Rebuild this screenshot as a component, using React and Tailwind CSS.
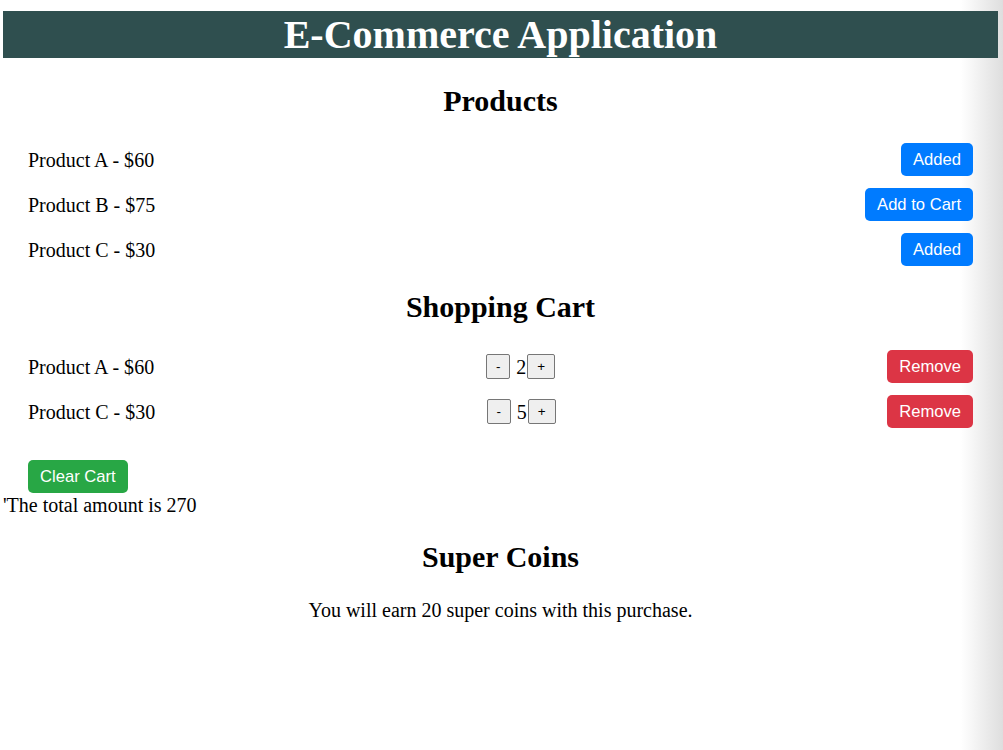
import React from "react";

const serif = { fontFamily: '"Liberation Serif", "Times New Roman", serif' };
const sans = { fontFamily: '"Liberation Sans", Arial, sans-serif' };

function Btn({ children, color, className = "" }) {
  return (
    <button
      className={`text-white rounded-[5px] px-[12px] pt-[1px] h-[33px] text-[16.6px] leading-none ${color} ${className}`}
      style={sans}
    >
      {children}
    </button>
  );
}

function Qty({ n }) {
  return (
    <div className="flex items-center">
      <button
        className="w-[24px] h-[25px] border border-[#767676] bg-[#efefef] rounded-[2px] text-[13.5px] leading-none"
        style={sans}
      >
        -
      </button>
      <span className="text-[20px] ml-[6px] mr-[1px] leading-none">{n}</span>
      <button
        className="w-[28px] h-[25px] border border-[#767676] bg-[#efefef] rounded-[2px] text-[13.5px] leading-none"
        style={sans}
      >
        +
      </button>
    </div>
  );
}

export default function App() {
  const products = [
    { name: "Product A", price: 60, added: true },
    { name: "Product B", price: 75, added: false },
    { name: "Product C", price: 30, added: true },
  ];
  const cart = [
    { name: "Product A", price: 60, qty: 2 },
    { name: "Product C", price: 30, qty: 5 },
  ];
  return (
    <div className="relative w-[1003px] h-[750px] bg-white overflow-hidden text-black" style={serif}>
      <div className="absolute top-0 right-0 w-[42px] h-full bg-gradient-to-r from-transparent to-[#dedede] pointer-events-none" />
      <div className="relative w-[995px] ml-[3px] pt-[11px]">
        <div className="bg-[#2f4f4f] h-[47px] flex items-center justify-center">
          <h1 className="text-white font-bold text-[40px] leading-none">E-Commerce Application</h1>
        </div>
        <h2 className="text-center font-bold text-[30px] leading-none mt-[28px]">Products</h2>
        <div className="mt-[27px] px-[25px] flex flex-col gap-[12px]">
          {products.map((p) => (
            <div key={p.name} className="flex items-center justify-between h-[33px]">
              <span className="text-[20px]">
                {p.name} - ${p.price}
              </span>
              <Btn color="bg-[#007bff]">{p.added ? "Added" : "Add to Cart"}</Btn>
            </div>
          ))}
        </div>
        <h2 className="text-center font-bold text-[30px] leading-none mt-[26px]">Shopping Cart</h2>
        <div className="mt-[28px] px-[25px] flex flex-col gap-[12px]">
          {cart.map((p) => (
            <div key={p.name} className="flex items-center justify-between h-[33px]">
              <span className="text-[20px]">
                {p.name} - ${p.price}
              </span>
              <Qty n={p.qty} />
              <Btn color="bg-[#dc3545]" className="h-[32px]">Remove</Btn>
            </div>
          ))}
        </div>
        <div className="px-[25px] mt-[32px] flex">
          <Btn color="bg-[#28a745]" className="h-[31px]">Clear Cart</Btn>
        </div>
        <div className="text-[20px] leading-[24px]">'The total amount is 270</div>
        <h2 className="text-center font-bold text-[30px] leading-none mt-[25px]">Super Coins</h2>
        <p className="text-center text-[20px] leading-[24px] mt-[26px]">You will earn 20 super coins with this purchase.</p>
      </div>
    </div>
  );
}
